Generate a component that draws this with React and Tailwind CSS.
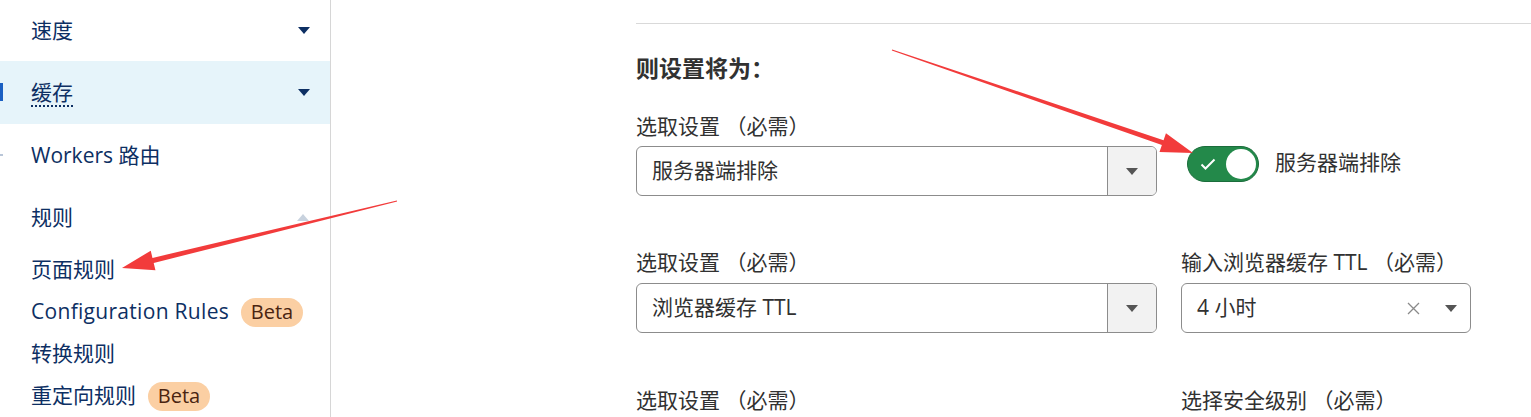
import React from 'react';

const font = "font-['Open_Sans','Noto_Sans_CJK_SC',sans-serif]";

// flecha roja de anotación (polígono con cuerpo que se ensancha)
function Arrow({ x1, y1, x2, y2, head = 32, half = 10 }) {
  const len = Math.hypot(x2 - x1, y2 - y1);
  const dx = (x2 - x1) / len;
  const dy = (y2 - y1) / len;
  const nx = -dy;
  const ny = dx;
  const bx = x2 - dx * head;
  const by = y2 - dy * head;
  const p = (x, y, k) => `${x + nx * k},${y + ny * k}`;
  const pts = [
    p(x1, y1, 0.6),
    p(bx, by, 2.6),
    p(bx, by, half),
    `${x2},${y2}`,
    p(bx, by, -half),
    p(bx, by, -2.6),
    p(x1, y1, -0.6),
  ].join(' ');
  return <polygon points={pts} fill="#f23b3b" />;
}

function Caret({ className = '' }) {
  return (
    <svg width="12" height="7" viewBox="0 0 12 7" className={className}>
      <path d="M0 0h12L6 7z" fill="currentColor" />
    </svg>
  );
}

function SideRow({ label, active, caret, up, h = 'h-[63px]', children }) {
  return (
    <div className={`relative flex items-center justify-between pl-[31px] pr-[20px] ${h} ${active ? 'bg-[#e6f4fa]' : ''}`}>
      <div className="flex items-center">{children || label}</div>
      {caret && <Caret className="text-[#0d2f63]" />}
      {up && <Caret className="text-[#c8d2de] rotate-180 -mt-[2px] mr-[1px]" />}
    </div>
  );
}

function Beta() {
  return (
    <span className="ml-[12px] inline-flex h-[29px] w-[62px] items-center justify-center rounded-full bg-[#fbcfa3] text-[20px] text-[#4a2410]">
      Beta
    </span>
  );
}

function Select({ value }) {
  return (
    <div className="flex h-[50px] items-stretch overflow-hidden rounded-[6px] border border-[#8c8c8c] bg-white">
      <div className="flex flex-1 items-center pl-[15px] text-[21px] text-[#313131]">{value}</div>
      <div className="flex w-[49px] items-center justify-center border-l border-[#8c8c8c] bg-[#f2f2f2]">
        <Caret className="text-[#555555]" />
      </div>
    </div>
  );
}

function Label({ children }) {
  return <div className="h-[28px] text-[21px] leading-[28px] text-[#313131] whitespace-nowrap">{children}</div>;
}

export default function App() {
  return (
    <div className={`relative flex h-[417px] w-full overflow-hidden bg-white ${font}`}>
      {/* barra lateral */}
      <aside className="w-[331px] shrink-0 border-r border-[#d6d6d6] text-[21px] text-[#0d2f63]">
        <SideRow label="速度" caret h="h-[61px]" />
        <SideRow active caret>
          <span className="absolute left-0 top-[22px] h-[18px] w-[3px] bg-[#1a5fc2]" />
          <span className="border-b-2 border-dotted border-[#0d2f63] leading-[26px]">缓存</span>
        </SideRow>
        <SideRow label="Workers 路由">
          <span className="absolute left-0 top-[30px] h-[2px] w-[3px] bg-[#b9c6d8]" />
          Workers 路由
        </SideRow>
        <SideRow label="规则" up h="h-[62px]" />
        <div className="pl-[31px]">
          <div className="flex h-[42px] items-center">页面规则</div>
          <div className="flex h-[42px] items-center">
            <span className="tracking-[0.3px]">Configuration Rules</span>
            <Beta />
          </div>
          <div className="flex h-[42px] items-center">转换规则</div>
          <div className="flex h-[42px] items-center">
            重定向规则
            <Beta />
          </div>
        </div>
      </aside>

      {/* contenido principal */}
      <main className="flex-1 pl-[305px] pt-[23px]">
        <div className="border-t border-[#d9d9d9]" />
        <h3 className="mt-[29px] h-[30px] text-[23px] font-bold leading-[30px] text-[#313131]">则设置将为：</h3>

        <div className="mt-[29px] grid grid-cols-[521px_290px] gap-x-[24px]">
          <div>
            <Label>选取设置 （必需）</Label>
            <div className="mt-[6px]">
              <Select value="服务器端排除" />
            </div>
          </div>
          <div className="flex items-start pl-[6px] pt-[34px]">
            <div className="relative h-[36px] w-[72px] rounded-full border border-[#1b6d3b] bg-[#23894a]">
              <svg width="16" height="12" viewBox="0 0 16 12" className="absolute left-[12px] top-[11px]">
                <path d="M1.5 6.5l4 4L14.5 1.5" fill="none" stroke="white" strokeWidth="2" />
              </svg>
              <div className="absolute right-[2px] top-[2px] h-[30px] w-[30px] rounded-full bg-white" />
            </div>
            <span className="ml-[16px] mt-[2px] text-[21px] leading-[28px] text-[#313131]">服务器端排除</span>
          </div>

          <div className="mt-[52px]">
            <Label>选取设置 （必需）</Label>
            <div className="mt-[7px]">
              <Select value="浏览器缓存 TTL" />
            </div>
          </div>
          <div className="mt-[52px]">
            <Label>输入浏览器缓存 TTL （必需）</Label>
            <div className="mt-[7px] flex h-[50px] items-center rounded-[6px] border border-[#8c8c8c] pl-[15px] pr-[13px] text-[21px] text-[#313131]">
              <span className="flex-1">4 小时</span>
              <svg width="13" height="13" viewBox="0 0 13 13" className="mr-[25px]">
                <path d="M1 1l11 11M12 1L1 12" stroke="#8a8a8a" strokeWidth="1.3" />
              </svg>
              <Caret className="text-[#555555]" />
            </div>
          </div>

          <div className="mt-[53px]">
            <Label>选取设置 （必需）</Label>
          </div>
          <div className="mt-[53px]">
            <Label>选择安全级别 （必需）</Label>
          </div>
        </div>
      </main>

      {/* anotaciones */}
      <svg className="pointer-events-none absolute inset-0" width="1531" height="417">
        <Arrow x1={397} y1={201} x2={122} y2={268} />
        <Arrow x1={892} y1={50} x2={1193} y2={153} />
      </svg>
    </div>
  );
}
